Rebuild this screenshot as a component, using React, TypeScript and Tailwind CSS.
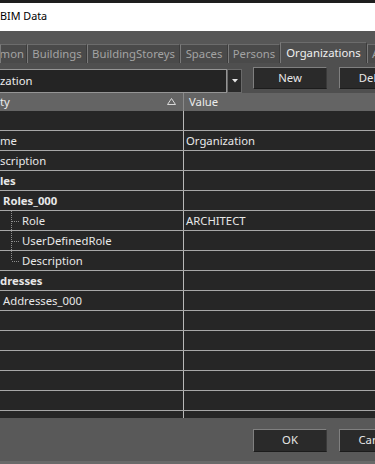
import React from "react";

type Row = {
  left?: string;
  value?: string;
  bold?: boolean;
  indent?: number;
  tree?: "mid" | "last";
};

const rows: Row[] = [
  {},
  { left: "me", value: "Organization" },
  { left: "scription" },
  { left: "les", bold: true },
  { left: "Roles_000", bold: true, indent: 3 },
  { left: "Role", value: "ARCHITECT", tree: "mid" },
  { left: "UserDefinedRole", tree: "mid" },
  { left: "Description", tree: "last" },
  { left: "dresses", bold: true },
  { left: "Addresses_000", indent: 3 },
  {},
  {},
  {},
  {},
  {},
];

function TreeLines({ last }: { last: boolean }) {
  return (
    <svg width="20" height="19" className="shrink-0">
      <line
        x1="11.5"
        y1="0"
        x2="11.5"
        y2={last ? 10 : 19}
        stroke="#8e8e8e"
        strokeWidth="1"
        strokeDasharray="1 1"
      />
      <line
        x1="12"
        y1="10.5"
        x2="20"
        y2="10.5"
        stroke="#8e8e8e"
        strokeWidth="1"
        strokeDasharray="1 1"
      />
    </svg>
  );
}

function Tab({
  label,
  w,
  selected,
  end,
}: {
  label: string;
  w: string;
  selected?: boolean;
  end?: boolean;
}) {
  return (
    <div
      className={`${w} shrink-0 flex items-center ${
        end ? "justify-end pr-[2px]" : "justify-center"
      } whitespace-nowrap overflow-hidden border-t border-l border-r border-t-[#6c6c6c] border-l-[#7a7a7a] border-r-[#3c3c3c] ${
        selected
          ? "h-[21px] bg-[#4f4f4f] text-[#f0f0f0] pb-[1px]"
          : "h-[19px] bg-[#4a4a4a] text-[#a3a3a3]"
      }`}
    >
      {label}
    </div>
  );
}

const btn =
  "w-[74px] shrink-0 bg-[#2a2a2a] border border-[#808080] border-b-[#1c1c1c] border-r-[#3a3a3a] flex items-center justify-center text-[#e6e6e6] pb-[1px]";

export default function App() {
  return (
    <div className="w-[375px] h-[464px] overflow-hidden bg-[#575757] flex flex-col text-[11.3px] text-[#e8e8e8] font-['Noto_Sans',sans-serif] leading-none">
      <div className="h-[3px] shrink-0 bg-[#1e1e1e]" />
      <div className="h-[28px] shrink-0 bg-white flex items-center text-black text-[10.8px] pb-[2px]">
        BIM Data
      </div>
      <div className="h-[11px] shrink-0" />
      <div className="h-[21px] shrink-0 flex items-end">
        <Tab label="mon" w="w-[27px]" end />
        <Tab label="Buildings" w="w-[60px]" />
        <Tab label="BuildingStoreys" w="w-[93px]" />
        <Tab label="Spaces" w="w-[48px]" />
        <Tab label="Persons" w="w-[52px]" />
        <Tab label="Organizations" w="w-[87px]" selected />
        <div className="w-[60px] shrink-0 h-[19px] bg-[#4a4a4a] text-[#a3a3a3] border-t border-l border-t-[#6c6c6c] border-l-[#7a7a7a] flex items-center pl-[4px] whitespace-nowrap">
          Addresses
        </div>
      </div>
      <div className="h-[30px] shrink-0 flex items-start bg-[#4f4f4f]">
        <div className="mt-[6px] h-[24px] flex shrink-0">
          <div className="w-[227px] h-[24px] bg-[#242424] border-t border-b border-r border-[#959595] flex items-center text-[#ececec] pb-[1px]">
            zation
          </div>
          <div className="w-[15px] h-[24px] bg-[#2a2a2a] border border-[#6a6a6a] flex items-center justify-center">
            <svg width="6" height="4">
              <polygon points="0,0 6,0 3,3.5" fill="#e6e6e6" />
            </svg>
          </div>
        </div>
        <div className={`ml-[11px] mt-[4px] h-[22px] ${btn}`}>New</div>
        <div className={`ml-[12px] mt-[4px] h-[22px] ${btn}`}>Delete</div>
      </div>
      <div className="h-[325px] shrink-0 bg-[#262626] flex flex-col overflow-hidden">
        <div className="h-[18px] shrink-0 bg-[#646464] flex">
          <div className="w-[183px] shrink-0 flex items-center justify-between pr-[7px] text-[#ececec] pb-[1px]">
            <span>ty</span>
            <svg width="9" height="7">
              <polygon
                points="4.5,0.5 8.5,6.5 0.5,6.5"
                fill="none"
                stroke="#d8d8d8"
                strokeWidth="1"
              />
            </svg>
          </div>
          <div className="w-px shrink-0 bg-[#8a8a8a]" />
          <div className="flex-1 flex items-center pl-[5px] text-[#ececec] pb-[1px]">
            Value
          </div>
        </div>
        {rows.map((r, i) => (
          <div
            key={i}
            className="h-[20px] shrink-0 flex border-b border-[#a7a7a7]"
          >
            <div
              className={`w-[183px] shrink-0 flex items-center whitespace-nowrap ${
                r.bold ? "font-bold" : ""
              }`}
              style={r.indent ? { paddingLeft: r.indent } : undefined}
            >
              {r.tree ? (
                <>
                  <TreeLines last={r.tree === "last"} />
                  <span className="ml-[2px]">{r.left}</span>
                </>
              ) : (
                r.left
              )}
            </div>
            <div className="w-px shrink-0 bg-[#b8b8b8]" />
            <div className="flex-1 flex items-center pl-[2px] whitespace-nowrap">
              {r.value}
            </div>
          </div>
        ))}
        <div className="flex-1 flex">
          <div className="w-[183px] shrink-0" />
          <div className="w-px shrink-0 bg-[#b8b8b8]" />
          <div className="flex-1" />
        </div>
      </div>
      <div className="h-[43px] shrink-0 bg-[#595959] flex items-start">
        <div className={`ml-[253px] mt-[11px] h-[23px] ${btn}`}>OK</div>
        <div className={`ml-[12px] mt-[11px] h-[23px] ${btn}`}>Cancel</div>
      </div>
      <div className="h-[3px] shrink-0 bg-[#696969]" />
    </div>
  );
}
